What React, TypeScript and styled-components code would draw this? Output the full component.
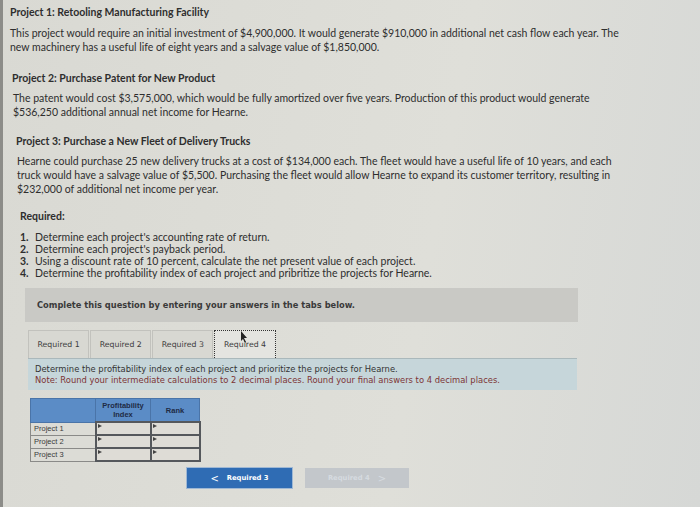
import React from "react"
import styled, { createGlobalStyle } from "styled-components"

const GlobalStyle = createGlobalStyle`
    html, body {
        margin: 0;
        padding: 0;
        background: #dcdcd6;
    }
`

const Page = styled.div`
    width: 700px;
    height: 507px;
    box-sizing: border-box;
    border-left: 3px solid #8c8c88;
    background: linear-gradient(100deg, #d9d9d3 0%, #dfdfd9 60%, #d6d8d6 100%);
    font-family: Lato, "Open Sans", sans-serif;
    color: #2e2e2e;
    overflow: hidden;
    position: relative;
    padding-top: 5px;
`

const Heading = styled.div<{ $indent: number; $top: number }>`
    font-weight: 700;
    font-size: 10.5px;
    line-height: 14px;
    margin: ${(p) => p.$top}px 0 0 ${(p) => p.$indent}px;
`

const Para = styled.p<{ $indent: number; $top: number; $width: number }>`
    font-size: 10.5px;
    line-height: 14px;
    margin: ${(p) => p.$top}px 0 0 ${(p) => p.$indent}px;
    max-width: ${(p) => p.$width}px;
`

const List = styled.ol`
    margin: 8px 0 0 17px;
    padding: 0;
    list-style: none;
    font-size: 10.5px;
    line-height: 12px;
`

const ListItem = styled.li`
    display: flex;
    gap: 5px;

    b {
        width: 10px;
    }
`

const Question = styled.div`
    margin: 9px 0 0 22px;
    width: 553px;
    height: 34px;
    background: #c9c9c5;
    display: flex;
    align-items: center;
    padding-left: 12px;
    box-sizing: border-box;
    font-family: "DejaVu Sans", Verdana, sans-serif;
    font-weight: 700;
    font-size: 8.3px;
    color: #3a3a3a;
`

const TabRow = styled.div`
    margin: 8px 0 0 25px;
    display: flex;
    position: relative;
`

const Tab = styled.div<{ $active?: boolean }>`
    height: 28px;
    padding: 0 8.5px;
    display: flex;
    align-items: center;
    font-family: "DejaVu Sans", Verdana, sans-serif;
    font-size: 7.8px;
    color: #3c3c3c;
    box-sizing: border-box;
    background: ${(p) => (p.$active ? "#e4e4e0" : "#d8d8d2")};
    border: ${(p) => (p.$active ? "1px dotted #333" : "1px solid #c2c2bd")};
    border-bottom: none;
    margin-right: 1px;
`

const Cursor = styled.svg`
    position: absolute;
    left: 212px;
    top: 1px;
`

const InfoBox = styled.div`
    margin-left: 25px;
    width: 549px;
    height: 32px;
    box-sizing: border-box;
    background: #c6d6da;
    border-top: 1px solid #aab8bb;
    padding: 5px 7px 0;
    font-family: "DejaVu Sans", Verdana, sans-serif;
    font-size: 8.4px;
    line-height: 11px;
    color: #333;
`

const Note = styled.div`
    color: #7d3434;
`

const Table = styled.table`
    margin: 8px 0 0 27px;
    border-collapse: collapse;
    font-family: "Liberation Sans", Arial, sans-serif;
    font-size: 7.5px;
`

const HeadCell = styled.th<{ $w: number }>`
    width: ${(p) => p.$w}px;
    height: 22px;
    background: #5b8cc6;
    color: #1e2a44;
    font-weight: 700;
    line-height: 9px;
    border: 1px solid #4a74a8;
    padding: 0;
`

const LabelCell = styled.td`
    height: 11px;
    padding: 0 3px;
    border: 1px solid #8a8a88;
    color: #3a3a3a;
    background: #dcdcd6;
    line-height: 11px;
`

const InputCell = styled.td`
    height: 11px;
    padding: 0;
    border: 2px solid #55585c;
    background: #dedcd6;
    position: relative;

    &::before {
        content: "";
        position: absolute;
        left: 1px;
        top: 1px;
        border-left: 4px solid #444;
        border-top: 2px solid transparent;
        border-bottom: 2px solid transparent;
    }
`

const ButtonRow = styled.div`
    margin: 6px 0 0 184px;
    display: flex;
    gap: 13px;
`

const NavButton = styled.div<{ $primary?: boolean }>`
    width: ${(p) => (p.$primary ? 105 : 104)}px;
    height: 20px;
    display: flex;
    align-items: center;
    justify-content: center;
    gap: 8px;
    font-family: "DejaVu Sans", Verdana, sans-serif;
    font-weight: 700;
    font-size: 6.8px;
    color: ${(p) => (p.$primary ? "#ffffff" : "#d6dbe0")};
    background: ${(p) => (p.$primary ? "#2f6cb4" : "#c3c7cb")};
    box-shadow: ${(p) => (p.$primary ? "0 0 0 1px #9fb8d4" : "none")};
`

const Arrow = styled.span`
    font-size: 10px;
    font-weight: 400;
`

const items = [
    "Determine each project's accounting rate of return.",
    "Determine each project's payback period.",
    "Using a discount rate of 10 percent, calculate the net present value of each project.",
    "Determine the profitability index of each project and pribritize the projects for Hearne.",
]

const App = () => {
    return (
        <Page>
            <GlobalStyle />
            <Heading $indent={7} $top={0}>
                Project 1: Retooling Manufacturing Facility
            </Heading>
            <Para $indent={7} $top={7} $width={624}>
                This project would require an initial investment of $4,900,000. It would generate $910,000 in
                additional net cash flow each year. The new machinery has a useful life of eight years and a
                salvage value of $1,850,000.
            </Para>
            <Heading $indent={9} $top={17}>
                Project 2: Purchase Patent for New Product
            </Heading>
            <Para $indent={10} $top={6} $width={620}>
                The patent would cost $3,575,000, which would be fully amortized over five years. Production of
                this product would generate $536,250 additional annual net income for Hearne.
            </Para>
            <Heading $indent={13} $top={15}>
                Project 3: Purchase a New Fleet of Delivery Trucks
            </Heading>
            <Para $indent={14} $top={6} $width={608}>
                Hearne could purchase 25 new delivery trucks at a cost of $134,000 each. The fleet would have a
                useful life of 10 years, and each truck would have a salvage value of $5,500. Purchasing the
                fleet would allow Hearne to expand its customer territory, resulting in $232,000 of additional
                net income per year.
            </Para>
            <Heading $indent={17} $top={13}>
                Required:
            </Heading>
            <List>
                {items.map((text, i) => (
                    <ListItem key={i}>
                        <b>{i + 1}.</b>
                        <span>{text}</span>
                    </ListItem>
                ))}
            </List>
            <Question>Complete this question by entering your answers in the tabs below.</Question>
            <TabRow>
                <Tab>Required 1</Tab>
                <Tab>Required 2</Tab>
                <Tab>Required 3</Tab>
                <Tab $active>Required 4</Tab>
                <Cursor width="8" height="12" viewBox="0 0 8 12">
                    <path d="M1 0 L1 10 L3 8 L5 12 L6 11 L4 7 L7 7 Z" fill="#222" />
                </Cursor>
            </TabRow>
            <InfoBox>
                <div>Determine the profitability index of each project and prioritize the projects for Hearne.</div>
                <Note>
                    Note: Round your intermediate calculations to 2 decimal places. Round your final answers to 4
                    decimal places.
                </Note>
            </InfoBox>
            <Table>
                <thead>
                    <tr>
                        <HeadCell $w={64}></HeadCell>
                        <HeadCell $w={54}>
                            Profitability
                            <br />
                            Index
                        </HeadCell>
                        <HeadCell $w={48}>Rank</HeadCell>
                    </tr>
                </thead>
                <tbody>
                    {["Project 1", "Project 2", "Project 3"].map((name) => (
                        <tr key={name}>
                            <LabelCell>{name}</LabelCell>
                            <InputCell />
                            <InputCell />
                        </tr>
                    ))}
                </tbody>
            </Table>
            <ButtonRow>
                <NavButton $primary>
                    <Arrow>&lt;</Arrow>
                    Required 3
                </NavButton>
                <NavButton>
                    Required 4
                    <Arrow>&gt;</Arrow>
                </NavButton>
            </ButtonRow>
        </Page>
    )
}

export default App
